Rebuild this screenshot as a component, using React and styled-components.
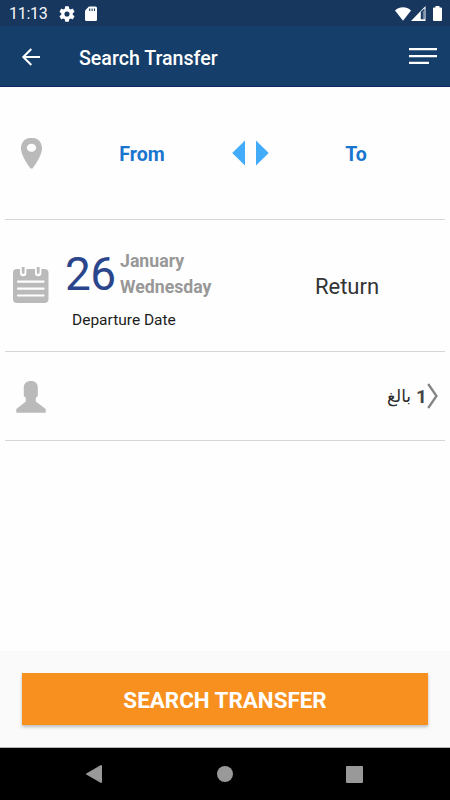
import React from 'react';
import styled, { createGlobalStyle } from 'styled-components';

const GlobalStyle = createGlobalStyle`
  * {
    box-sizing: border-box;
  }

  body {
    margin: 0;
    background: #ffffff;
    font-family: Roboto, "DejaVu Sans", sans-serif;
  }
`;

const Screen = styled.div`
  display: flex;
  flex-direction: column;
  height: 800px;
  width: 450px;
  overflow: hidden;
  background: #fefefe;
`;

const StatusBar = styled.div`
  display: flex;
  align-items: center;
  height: 26px;
  padding: 1px 8px 0 9px;
  background: #17375e;
  color: #f4f6f9;
`;

const Clock = styled.span`
  width: 50px;
  padding-top: 1px;
  font-size: 16px;
  letter-spacing: -0.3px;
  line-height: 20px;
`;

const StatusIcons = styled.div`
  display: flex;
  align-items: center;
  gap: ${({ $gap }) => $gap};
  margin-left: ${({ $end }) => ($end ? 'auto' : '0')};
`;

const BatterySlot = styled.div`
  display: flex;
  padding-left: 7px;
`;

const Toolbar = styled.header`
  display: flex;
  align-items: center;
  height: 61px;
  padding: 1px 13px 0 21px;
  background: #163e6a;
  border-bottom: 1px solid #0b2a63;
`;

const Title = styled.h1`
  flex: 1;
  margin: 4px 0 0 38px;
  color: #ffffff;
  font-size: 19.6px;
  font-weight: 500;
  line-height: 24px;
`;

const IconButton = styled.button`
  display: flex;
  padding: 0;
  border: none;
  background: none;
  cursor: pointer;
`;

const Form = styled.main`
  flex: 1;
  padding: 0 5px;
`;

const Row = styled.section`
  display: grid;
  grid-template-columns: ${({ $columns }) => $columns};
  align-items: center;
  height: ${({ $height }) => $height};
  border-bottom: 1px solid #d6d6d6;
`;

const RowIcon = styled.div`
  display: flex;
  justify-content: center;
  width: 52px;
  padding-top: ${({ $drop }) => $drop || '0'};
`;

const Place = styled.div`
  padding-top: 3px;
  text-align: center;
  color: #1976cf;
  font-size: 19.6px;
  font-weight: 700;
  line-height: 24px;
`;

const SwapSlot = styled.span`
  display: flex;
  justify-content: center;
  width: 56px;
`;

const Departure = styled.div`
  padding-top: 6px;
`;

const DateLine = styled.div`
  display: flex;
  align-items: center;
  height: 53px;
`;

const Day = styled.div`
  width: 56px;
  padding-left: 1px;
  color: #2a458b;
  font-size: 46px;
  letter-spacing: -0.5px;
  line-height: 52px;
`;

const MonthAndWeekday = styled.div`
  color: #989898;
  font-size: 17.7px;
  font-weight: 700;
  line-height: 26px;
`;

const DateLabel = styled.div`
  padding: 9px 0 0 8px;
  color: #1c1c1c;
  font-size: 15.5px;
  line-height: 20px;
`;

const ReturnLabel = styled.div`
  padding-top: 2px;
  text-align: center;
  color: #333333;
  font-size: 22px;
  line-height: 28px;
`;

const Passengers = styled.div`
  display: flex;
  align-items: center;
  justify-content: flex-end;
  padding-right: 7px;
`;

const PassengerText = styled.div`
  display: flex;
  align-items: center;
  gap: 5px;
  color: #2b2b2b;
  font-size: 17px;
  line-height: 24px;
`;

const Count = styled.span`
  padding-top: 1px;
  color: #444444;
  font-size: 19px;
  font-weight: 700;
`;

const Footer = styled.footer`
  height: 97px;
  padding: 22px;
  background: #fafafa;
  border-bottom: 1px solid #b5b5b5;
`;

const SearchButton = styled.button`
  display: block;
  width: 100%;
  height: 52px;
  padding: 2px 0 0;
  border: none;
  background: #f7901e;
  box-shadow: 0 2px 3px rgba(0, 0, 0, 0.25);
  color: #ffffff;
  font-family: inherit;
  font-size: 22.4px;
  font-weight: 700;
  cursor: pointer;
`;

const NavBar = styled.nav`
  display: flex;
  align-items: center;
  justify-content: space-between;
  height: 52px;
  padding: 0 87px 0 86px;
  background: #000000;
`;

const GearIcon = () => (
  <svg width="16" height="16" viewBox="2 2 20 20" fill="#fff">
    <path d="M19.14 12.94c.04-.3.06-.61.06-.94s-.02-.64-.07-.94l2.03-1.58a.49.49 0 0 0 .12-.61l-1.92-3.32a.49.49 0 0 0-.59-.22l-2.39.96c-.5-.38-1.03-.7-1.62-.94l-.36-2.54a.48.48 0 0 0-.48-.41h-3.84c-.24 0-.43.17-.47.41l-.36 2.54c-.59.24-1.13.57-1.62.94l-2.39-.96a.48.48 0 0 0-.59.22L2.74 8.87a.48.48 0 0 0 .12.61l2.03 1.58c-.05.3-.09.63-.09.94s.02.64.07.94l-2.03 1.58a.49.49 0 0 0-.12.61l1.92 3.32c.12.22.37.29.59.22l2.39-.96c.5.38 1.03.7 1.62.94l.36 2.54c.05.24.24.41.48.41h3.84c.24 0 .44-.17.47-.41l.36-2.54c.59-.24 1.13-.56 1.62-.94l2.39.96c.22.08.47 0 .59-.22l1.92-3.32a.48.48 0 0 0-.12-.61zM12 15.2a3.2 3.2 0 1 1 0-6.4 3.2 3.2 0 0 1 0 6.4z" />
  </svg>
);

const SdCardIcon = () => (
  <svg width="12" height="15" viewBox="0 0 12 15">
    <path d="M4 .5h6.5A1.5 1.5 0 0 1 12 2v11.5a1.5 1.5 0 0 1-1.5 1.5h-9A1.5 1.5 0 0 1 0 13.500v-9z" fill="#fff" />
    <path d="M4.7 2.500v2.500M7.100 2.500v2.500M9.500 2.500v2.500" stroke="#17375e" strokeWidth="1.100" />
  </svg>
);

const WifiIcon = () => (
  <svg width="16" height="14" viewBox="0 0 16 14" fill="#fff">
    <path d="M0 3.500C4.500-.9 11.500-.9 16 3.500L8 13.700z" />
  </svg>
);

const SignalIcon = () => (
  <svg width="15" height="15" viewBox="0 0 15 15">
    <path d="M14.500 0v15H0z" fill="#fff" />
    <path d="M9.800 5.800L13.500 2.500v10.800H9.800z" fill="#17375e" />
    <path d="M12.300 5v8" stroke="#8fa3bd" strokeWidth="0.900" />
  </svg>
);

const BatteryIcon = () => (
  <svg width="9" height="15" viewBox="0 0 9 15" fill="#fff">
    <path d="M2.500 0h4v1.500H8a1 1 0 0 1 1 1V14a1 1 0 0 1-1 1H1a1 1 0 0 1-1-1V2.500a1 1 0 0 1 1-1h1.500z" />
  </svg>
);

const BackIcon = () => (
  <svg width="20" height="18" viewBox="0 0 20 18" fill="none" stroke="#fff" strokeWidth="2">
    <path d="M10.300 1L2.300 9l8 8M2.300 9h16.700" />
  </svg>
);

const MenuIcon = () => (
  <svg width="28" height="17" viewBox="0 0 28 17" fill="#fff">
    <path d="M0 0h28v2.300H0zM0 7h28v2.300H0zM0 13.700h20v2.300H0z" />
  </svg>
);

const PinIcon = () => (
  <svg width="21" height="31" viewBox="0 0 21 31" fill="#bababa">
    <path
      fillRule="evenodd"
      d="M8 0h5c5 1 8 5 8 10.500 0 5-4 12.500-9.500 20h-2C4 23 0 15.500 0 10.500 0 5 3 1 8 0zM10.500 5.700c-2.700 0-4.700 1.700-4.700 4s2 4 4.700 4 4.700-1.700 4.700-4-2-4-4.700-4z"
    />
  </svg>
);

const SwapIcon = () => (
  <svg width="37" height="26" viewBox="0 0 37 26" fill="#42abfa">
    <path d="M13 .5v25L.2 13zM24 .5v25L36.700 13z" />
  </svg>
);

const CalendarIcon = () => (
  <svg width="36" height="37" viewBox="0 0 36 37">
    <rect y="2" width="35.500" height="34" rx="4" fill="#bababa" />
    <path d="M7 0v6a3.200 3.200 0 0 0 6.400 0V0zM22 0v6a3.200 3.200 0 0 0 6.400 0V0z" fill="#fefefe" />
    <path d="M8.800 0h2.800v5.600a1.400 1.400 0 0 1-2.800 0zM23.800 0h2.800v5.600a1.400 1.400 0 0 1-2.800 0z" fill="#bababa" />
    <path d="M5 14.700h25.500M5 21.700h25.500M5 28.500h25.500" stroke="#fefefe" strokeWidth="2.200" strokeLinecap="round" />
  </svg>
);

const PersonIcon = () => (
  <svg width="30" height="32" viewBox="0 0 30 32" fill="#bababa">
    <path d="M15 0c4.500 0 6.800 2.500 6.800 6.500V15l-2 2v3.500L29.700 28v3.700H.3V28l9.500-7.500V17l-2-2V6.500C7.800 2.500 10.500 0 15 0z" />
  </svg>
);

const ChevronIcon = () => (
  <svg width="11" height="26" viewBox="0 0 11 26" fill="none" stroke="#858585" strokeWidth="2.300">
    <path d="M1.200 1l8.300 12-8.300 12" />
  </svg>
);

const NavBackIcon = () => (
  <svg width="16" height="18" viewBox="0 0 16 18" fill="#999">
    <path d="M15 0q1 0 1 1v16q0 1-1 1L.3 9.500q-.5-.5 0-1z" />
  </svg>
);

const NavHomeIcon = () => (
  <svg width="17" height="16" viewBox="0 0 17 16" fill="#999">
    <circle cx="9" cy="8" r="8" />
  </svg>
);

const NavRecentIcon = () => (
  <svg width="17" height="17" viewBox="0 0 17 17" fill="#999">
    <rect width="17" height="17" rx="1" />
  </svg>
);

const App = () => {
  return (
    <Screen>
      <GlobalStyle />
      <StatusBar>
        <Clock>11:13</Clock>
        <StatusIcons $gap="10px">
          <GearIcon />
          <SdCardIcon />
        </StatusIcons>
        <StatusIcons $gap="0" $end>
          <WifiIcon />
          <SignalIcon />
          <BatterySlot>
            <BatteryIcon />
          </BatterySlot>
        </StatusIcons>
      </StatusBar>

      <Toolbar>
        <IconButton aria-label="Back">
          <BackIcon />
        </IconButton>
        <Title>Search Transfer</Title>
        <IconButton aria-label="Menu">
          <MenuIcon />
        </IconButton>
      </Toolbar>

      <Form>
        <Row $columns="57px 160px 56px 156px" $height="133px">
          <RowIcon $drop="1px">
            <PinIcon />
          </RowIcon>
          <Place>From</Place>
          <IconButton aria-label="Swap">
            <SwapSlot>
              <SwapIcon />
            </SwapSlot>
          </IconButton>
          <Place>To</Place>
        </Row>

        <Row $columns="59px 190px 186px" $height="132px">
          <RowIcon>
            <CalendarIcon />
          </RowIcon>
          <Departure>
            <DateLine>
              <Day>26</Day>
              <MonthAndWeekday>
                <div>January</div>
                <div>Wednesday</div>
              </MonthAndWeekday>
            </DateLine>
            <DateLabel>Departure Date</DateLabel>
          </Departure>
          <ReturnLabel>Return</ReturnLabel>
        </Row>

        <Row $columns="57px 1fr" $height="89px">
          <RowIcon $drop="2px">
            <PersonIcon />
          </RowIcon>
          <Passengers>
            <PassengerText dir="rtl">
              <Count>1</Count>
              <span>بالغ</span>
            </PassengerText>
            <ChevronIcon />
          </Passengers>
        </Row>
      </Form>

      <Footer>
        <SearchButton>SEARCH TRANSFER</SearchButton>
      </Footer>

      <NavBar>
        <NavBackIcon />
        <NavHomeIcon />
        <NavRecentIcon />
      </NavBar>
    </Screen>
  );
};

export default App;
